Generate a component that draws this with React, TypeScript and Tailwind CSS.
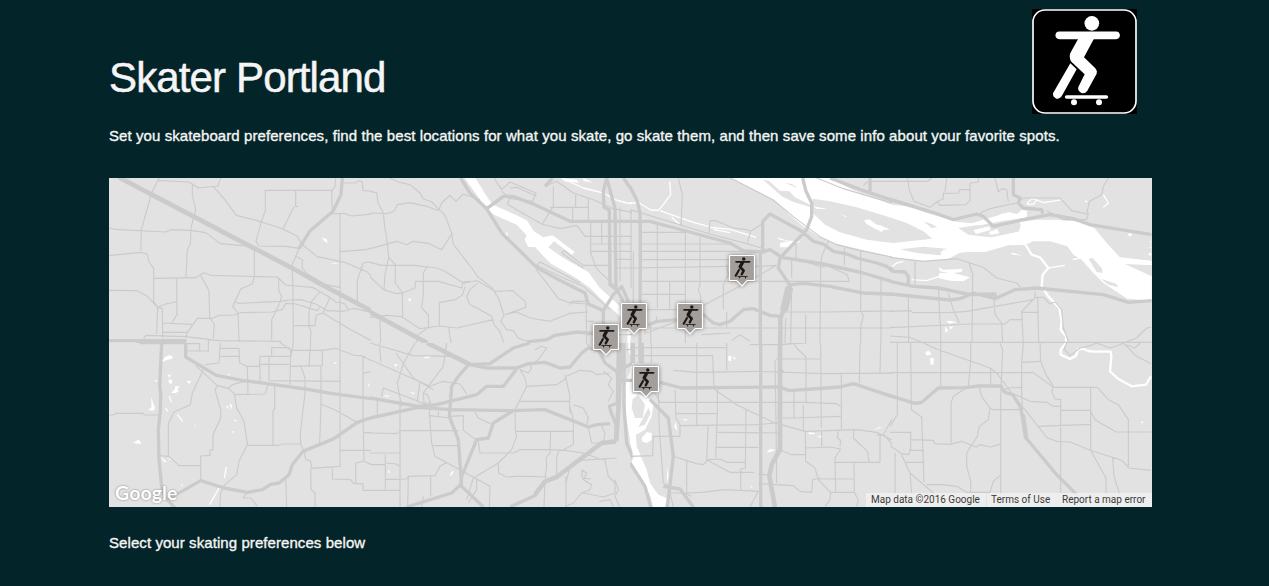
import React from "react";

type Tile = {
  x: number;
  y: number;
  water: string;
  land?: string;
  streams?: string;
  creek?: string;
  thin: string;
  medium: string;
  wide?: string;
  extra?: string;
};

// Each tile covers 261x165 map pixels and is drawn in units of a third of a pixel.
const tiles: Tile[] = [
  {
    x: 0,
    y: 0,
    water: "M638 180 L652 182 L657 194 L648 191Z M666 257 L678 254 L690 257Z",
    thin: "M150 0L128 45L97 155L95 218 M145 7L240 12L268 30L328 24L330 12L336 0 M250 16L250 52L260 95L246 150L244 198L235 215L231 298 M0 150L20 154L168 162L188 155L245 157L290 164L334 197L435 206 M0 233L95 223L115 228L120 252L134 272L134 370L146 388 M135 301L260 299L285 284L305 292L505 297L530 321L610 328L662 358L680 372L706 376L718 394 M313 26L345 62L382 112L455 131L520 152L565 175L578 198 M668 37L469 37L469 98L457 131L441 190L450 204L530 205L570 211 M560 37L560 85L568 86 M556 85L522 152 M680 0L678 25L668 40L670 98 M668 108L705 106L728 114L810 106 M693 108L693 495 M700 15L738 15L752 8L760 12L762 37L805 42L808 80 M695 221L770 215L810 203 M578 198L625 236L710 254L775 282L810 322 M570 212L549 262L552 330L553 495 M560 235L580 245L580 270L595 288L650 320L693 328 M745 372L745 307L762 255L780 252L810 262 M436 208L436 296L430 318L395 333L371 386L387 405L390 490 M378 372L390 376L515 370L540 366L575 365L620 378L655 398L705 400L735 391L790 404 M0 337L85 338L115 355L146 388L143 468 M146 388L170 378L203 371 M203 302L204 410L188 435 M146 388L160 392L161 480 M162 435L250 439 M162 463L235 463 M275 292L300 338L302 420L316 438L313 480 M230 480L235 463L265 421L310 421L330 412L375 411L395 404L490 402L520 394L530 376L560 378L625 398L632 388 M508 298L510 340L518 355L510 380L488 425L488 485 M104 482L110 472L230 476L330 488L515 490L515 495 M632 342L608 370L600 400L600 445L606 460L604 495 M662 360L642 405L622 412L618 443L555 443 M642 405L720 452L800 495 M298 482V495 M790 412L800 427L810 427",
    medium: "M700 0L696 50L672 100L602 160L570 212 M0 488L232 488 M80 491L232 491",
    wide: "M30 -2L430 208L545 268L620 310L812 412",
  },
  {
    x: 261,
    y: 0,
    water:
      "M284 0L316 0L350 55L368 80L440 112L472 128L490 158L520 178L548 172L614 222L606 230L552 190L535 208L580 240L655 282L690 330L750 385L756 420L700 370L660 330L622 302L540 255L495 207L475 207L464 185L470 172L440 140L375 112L350 95L320 50Z M405 170L412 160L413 176Z M114 364L124 360L120 372Z M772 455L785 460L780 495L772 495Z M572 0L620 5L628 14L585 10Z M640 0L670 15L640 8Z",
    streams: "M585 5L640 30L700 45L735 65L770 75L805 78",
    thin: "M60 0L85 12L120 20L150 45L160 62L185 72L205 92L222 108L232 130L245 165L250 198L280 238L305 270L325 298L365 328L385 360L395 390L402 412L392 430L410 455L430 458L445 480L470 490 M205 98L215 75L240 52L258 70L280 48L330 65 M0 40L20 44L24 75L40 105L44 145L50 180L56 238L76 260L76 315L98 345 M0 105L50 107L72 100L82 80L120 74L170 85L205 98 M0 212L80 190L110 200L130 190L175 196L215 215L247 165 M0 253L35 262L130 262L200 270L225 280L275 312L300 310 M56 238L45 290L42 335 M0 296L40 335L75 346L97 346L135 330L137 310L205 310L275 330L278 316L300 312L322 308 M172 265L160 285L160 350L155 390L175 410L176 452 M97 346L98 416 M208 444L208 374L255 365L278 350L285 325 M322 316L300 335L290 358L300 380L330 395L365 415L372 440L388 458L402 495 M322 308L350 325L375 340L428 338L465 370L468 388L405 410 M0 418L50 412L95 416L150 452L208 444L260 450L370 425 M405 410L440 402L480 420L540 430L600 406L655 402 M498 273L545 335L565 362L600 374L650 378 M510 252L500 262L580 300L640 325L720 395 M510 252L630 315 M372 0L395 35L420 12L498 45L488 70L412 60 M550 25L550 85L517 138 M655 60L655 130M617 45L617 88L540 88 M608 88L608 130M617 88L655 88 M395 40L420 60L412 78L440 95L515 138L570 152L620 142L645 175L810 175 M662 130L662 225L680 272L740 330 M695 135L695 198M662 198L810 198M662 220L810 220 M575 225L582 218L640 262L690 262L720 262 M575 225L640 270 M735 244L810 244M740 270L810 270M750 88V310M783 95V330M797 80V320 M525 25L560 10L610 45L670 65L730 92L810 108 M420 30L440 28L500 55 M648 355L650 495M650 430L670 430 M650 470L810 470 M30 425L32 495 M236 450L243 495 M138 495L145 470L170 452 M600 380L605 370L648 370",
    medium: "M272 0L300 45L350 92L395 165L500 268L560 302L645 345L655 378L700 398L730 350L755 325L775 370 M350 92L400 55L428 55L495 80L600 130L810 130 M525 25L548 0 M710 0L700 40L702 88L718 96L720 320L740 335 M710 0L735 90L738 330L760 370 M760 0L795 50L810 88 M700 398L700 440 M470 492L530 485L555 472L620 462L670 466",
    wide: "M0 402L172 495",
  },
  {
    x: 521,
    y: 0,
    water: "M450 195L480 188L512 190L478 208L450 208Z M440 178L480 190L450 186Z M800 255L810 250L808 275L792 270Z",
    streams: "M0 75L28 75L62 96L85 97L100 80L122 50L119 10 M90 98L130 112L190 133L235 145 M125 118L150 140 M240 148L300 154L378 178 M250 154L300 164",
    thin: "M302 0L430 66L490 116L570 176L620 200L690 218L812 242 M0 95L240 168L350 197L445 225 M145 0L157 50L153 145 M237 165L240 128L258 128L310 150L350 155L362 160L352 192M362 160L400 135 M82 135L82 390 M166 160V495 M210 178V320L205 335L212 355V375 M35 163H165 M35 198H300 M35 220H400 M35 245H300 M5 270L300 265L390 265L440 262 M35 310H655 M119 312V395M35 349H165 M35 395H145 M290 262L295 290L280 320L280 395 M215 385L335 322L440 262 M290 402V450 M485 248V300 M498 190V240M498 240L575 268L590 262 M595 190L575 235L572 268L570 495M590 262L652 290L658 312 M643 210V262M692 218V400L700 412L692 445V495 M753 305V495 M465 402H590L700 400L810 398 M220 450H810 M215 470L300 465 M305 488L330 470L360 490 M485 320L482 495 M467 420L465 495 M527 410V495M700 24L708 14L720 10L810 10M560 0L640 32L700 50L812 82 M45 395V470M62 430V495 M0 450H140 M80 415V430M50 465L140 430 M10 220V380",
    medium: "M30 495L31 170L30 105L22 70L0 25 M0 130L60 130L190 165L300 195L340 218L400 222L420 215L455 238L580 258L700 285L812 318 M398 222L398 130L420 108L515 160L550 190L580 198L610 220L650 228L680 240L740 255L770 265L790 282L812 282 M518 0L528 40L545 75L545 115L530 155L450 240L445 270L480 322 M482 320L520 316L600 325L700 345L812 350 M391 222L391 495 M600 0L700 38L812 75M720 0V40 M55 442L80 430L142 425 M218 408L250 435L270 440L300 430L340 395L370 392L420 412L450 415",
    wide: "M480 320L462 395L451 420L451 495",
    extra: "M478 328L462 398",
  },
  {
    x: 781,
    y: 0,
    water:
      "M0 80L60 85L130 115L205 132L245 136L270 128L340 108L355 102L380 108L400 98L412 110L405 120L385 122L330 135L260 145L210 150L240 168L305 178L385 160L392 145L390 132L440 125L500 125L580 132L615 152L650 195L690 238L785 248L785 262L705 258L785 295L785 368L712 362L640 315L610 285L575 245L550 230L532 205L480 190L430 190L405 200L355 202L285 222L210 222L170 245L95 248L0 238Z M145 268L160 275L218 272L215 282L190 285L240 298L220 310L180 308L145 300L148 285L175 285L150 280Z M715 166h10v8h-10Z M775 225L783 225V234L777 232Z M776 206L783 206V212Z M778 190L783 190V196Z M360 225L372 225L395 233L370 230Z M170 430L180 428L200 433L178 437Z M165 445L175 458L166 464Z M178 446L190 445L182 455Z",
    land: "M596 242L608 240L635 270L638 285L620 282Z M632 302L680 318L685 328L655 320Z M650 325L695 355L670 350Z",
    streams: "M640 50L655 75L640 88 M65 305L110 308L148 295 M475 270L505 265L525 262 M548 245L570 240 M585 68L592 72 M0 270L20 255L40 250 M410 78L425 62L440 64L432 78L412 80 M440 66L460 74L500 68L518 64",
    creek: "M405 198L425 230L450 238L475 270L458 290L455 325L475 355L508 390L515 430L512 455L528 475L528 495",
    thin: "M0 10H112L125 0 M52 0L58 35L68 60L72 70L120 88L140 72L160 62L160 46L205 45L208 35L240 35L240 15L265 12L265 0 M170 0L165 40M240 35V68L228 80L150 82L140 70 M315 0L325 42L335 32L350 35L355 70 M275 102L300 92L380 75L400 60L510 60L545 98L590 108L598 70L635 50L640 25L655 0 M0 60L70 82L135 106L195 125 M275 102L270 115M470 98L520 125L590 125L595 105 M0 238L100 250L200 242L240 255L280 268L320 300L380 315L392 328 M238 255L248 290L246 495 M75 250L75 322 M0 400L60 398L70 404L190 403L230 400L300 388L430 365M55 350L56 495 M146 335L148 400L152 450L152 495 M0 448L20 448L240 438L345 438L360 425L395 425 M175 345L180 365L192 400L208 435 M312 365L315 410L335 435L338 495 M0 474L60 478L100 495 M435 340V360L395 400L400 495 M395 403H445M443 360L446 495 M435 358L460 358L480 378L495 372L515 395L520 450L535 490 M0 493H785 M700 495L740 480L770 450L783 448",
    medium: "M0 65L135 105L190 125L260 108L280 115L310 145L400 125L480 110L550 122L600 140L785 170 M370 0V50L390 60L385 75L400 90L455 95L458 108 M0 268L10 280L45 282L55 295V322 M0 310L70 325L145 330L240 350L315 348V362 M0 348L180 366L210 362L250 345L315 362L375 335L440 330L640 350L715 373L785 368",
  },
  {
    x: 0,
    y: 165,
    water:
      "M158 58L168 42L182 36L192 42L188 48L175 50Z M175 96L186 94L182 104Z M178 110L190 110L188 124L180 120Z M232 114L246 114L242 123Z M198 130L212 130L205 140L210 145L200 150L186 150L198 138Z M126 162L138 195L134 203L118 202L128 192Z M72 300L90 289L97 303Z M152 338L175 358L165 356Z M180 345L185 350L180 352Z M350 188L358 190L358 200Z M362 182L370 186L366 200Z M372 215L382 214M374 230L384 232L380 236Z M370 265L376 265L372 272Z M258 242L261 252L257 248Z M672 60L684 57L680 63Z M778 118L782 130L778 132Z M354 96L360 92L362 97Z M137 112L146 112L142 118Z M216 422L224 430L218 430Z",
    streams: "M205 215L222 236 M352 372L346 405 M330 435L302 485 M180 160L188 178 M170 195L176 205",
    thin: "M0 216L15 216L20 211L102 211L106 216L148 216 M230 2L272 2L272 24L298 24L298 0 M235 24H272 M260 68L325 128L318 140L335 200L335 225L312 275L312 320L303 322L303 337L275 339L275 412 M283 80L250 150L244 185L195 207L178 242L178 338L210 368L275 367 M178 340L152 338 M325 128L358 136L376 153L383 195L405 235L415 302L413 310L390 355L383 395L345 428L335 450L332 495 M290 65L330 60L334 0 M334 16L390 16L392 60L415 70L451 70L453 40L545 40L553 0 M334 40H390M488 40V14L540 14L545 22L640 22L680 16L735 37L760 38 M515 0L545 20L543 125 M451 64L540 64M480 40V113L693 115 M453 70V115M415 70L417 152M376 155L468 153L478 125 M358 136L370 125L415 113 M543 70L640 68L640 22 M605 0L600 68M576 70L588 105L588 150L574 270L575 305L585 322 M636 70V185L632 300 M497 130V198L492 202V307M413 307L510 307L520 303L575 303 M693 0V370L608 376 M590 350L585 322 M590 350L605 354L608 376 M636 183L680 202L742 237 M760 38L795 58L805 75L810 82 M762 38V230L765 355L780 362L810 365M763 268L810 270M695 322L780 322L810 330 M605 376L606 440L618 450V495 M670 376V408L725 410L735 422L762 422L762 442L810 442M740 422V360L762 355 M530 402L533 495 M413 450L402 465L425 465L445 490 M810 82L775 88L762 92",
    medium: "M158 0L152 130L155 150L154 205L148 260L150 350L158 430L165 460L198 495 M92 -1H230V42L322 97L400 112L590 138L670 152L810 170 M175 470L275 413L345 435L415 448L460 440L485 424L510 420L540 395L550 365L582 325L675 287L745 238L810 216",
  },
  {
    x: 261,
    y: 165,
    water:
      "M158 46L172 38L185 38L175 45Z M72 65L84 63L76 72Z M118 146L135 150L130 154Z M38 157L62 158L50 162Z M240 395L248 382L250 388L242 400Z M53 380L62 388L56 390Z M776 25L784 50L780 85L765 130L768 220L780 290L810 360L810 200L795 180L800 150L790 140L790 0L775 0Z",
    land: "M800 170L788 205L790 250L810 290L810 170Z",
    thin: "M28 0L33 58 M0 50L90 90L180 130L220 115L270 123L290 152 M0 0L130 38L240 40L290 62 M135 0L100 62L82 120L90 165L95 190 M78 30L130 105L190 140 M230 0L220 70L190 110L160 150L162 180L182 180L172 155L160 150 M35 160L40 135L145 175M150 115L142 175L182 190L178 210L185 300L195 340L265 378L360 430L358 495 M22 170V215 M90 175V492M0 270L80 272L92 263L265 263 M0 330H90M46 335V440 M0 365H46M0 442H90 M46 360L78 363L90 370 M46 410L110 408L115 400L195 398L210 370L230 358 M115 400L113 492 M182 400V460M155 495L160 460 M190 308L265 308M240 220L280 218V262L320 292 M180 218L240 225M205 205V222 M315 208L325 225L368 245 M435 200L436 262L440 280L425 320L385 360L310 405L290 470 M325 295L330 330L430 330L450 320L540 320L585 322L640 330L690 348 M436 265L610 265M450 175H598L600 210M435 200L470 130L465 105L450 80L475 90L485 75L480 65 M470 130L560 125L590 105 M495 20L515 10L530 15L505 50L485 65 M585 95L600 160L598 185L610 230V305L580 320 M590 100L630 82L665 85L680 95L720 90 M542 265L540 330L528 345L530 370L525 405 M385 362L386 390L410 402L440 400L480 400L530 402 M568 322L560 340V400 M588 400V492M588 420L600 370L635 352L690 348L740 345 M635 380L650 390L640 410L665 425L660 440L635 450L610 480L588 490 M636 380L636 405L662 408M640 450L700 462L735 450L735 420L715 400L705 350L690 348 M525 410L522 495 M320 405L320 440L295 480 M610 185L640 195L655 225L650 245 M655 255L665 300L690 300 M700 85L725 105L715 125L730 145L715 175 M735 410L745 440L735 460L750 495 M688 475L720 470L730 490 M745 0V60M720 20H810 M650 0L665 20L690 15 M690 240L705 270L700 295",
    medium: "M300 65L350 75L440 75L475 62L525 58L570 75L600 72L635 30L655 15L685 22 M300 65L360 62L400 35L430 15L480 0 M300 60L265 100L245 130L238 220L265 290L275 430L340 492 M0 165L145 190L200 185L320 155L350 130L400 130L440 78 M0 225L145 193L240 200L430 203L525 200L600 230L655 252L680 245L720 242 M430 203L370 240L355 285L320 290L275 400L272 425L245 450L110 492 M685 20L705 60L740 85L745 110 M745 0L742 180L718 190L725 210 M720 200L738 245L740 290 M750 80L790 60 M762 0V190L770 300L812 400 M745 112L795 112 M420 492L500 455",
    wide: "M172 0L300 65 M495 455L525 415L560 402L695 300L738 295 M750 0L752 80 M750 80L745 200L738 295",
  },
  {
    x: 521,
    y: 165,
    water:
      "M0 150L50 160L70 185L65 220L45 260L18 275L20 310L50 380L60 420L85 455L110 465L105 492L70 492L60 455L25 400L0 360Z M35 285L50 268L65 270L65 290L50 300L36 295Z M132 250L138 238L142 265Z M110 370L116 400L112 420Z M158 228L175 230L165 233Z M295 38L305 40L303 55L294 52Z M310 40L318 46L312 50Z M410 328L420 318L438 320L418 328Z M535 268L555 270L552 274L538 274Z M560 280L578 278L575 284Z M732 262L745 253L758 252Z M360 432L366 429L368 434Z",
    land: "M8 168L25 155L45 185L38 225L15 225L5 195Z M55 195L62 210L45 245L25 252Z M0 370L12 340L0 300Z",
    thin: "M0 14H290M0 38H248L252 135M290 0V82 M130 82L200 88L385 85L580 92L810 90 M64 0V60M40 0V60 M200 0V245 M88 178H520L620 182L632 190 M262 140V210L257 345 M138 212H262M135 140L138 225L150 245V280L70 280L68 338L0 340 M150 248L380 245L440 240 M252 138L320 185L430 238L525 265L680 260L740 268L800 298 M262 268L450 270M258 313H385 M348 200L346 375L332 378V445 M234 248L230 350L300 388L372 388 M130 340L200 362L220 365L235 350L270 348L290 358L348 358 M170 350V450L215 448L285 440L385 445L360 492 M120 450H165L185 460M120 450L130 492 M360 5L450 5L530 0 M460 5L490 0L500 15L528 42V180 M438 48H570M435 50L438 240L440 420M572 0L574 255 M492 145V225L632 220M440 225H495 M520 185V265 M634 92V258 M690 0L688 120M752 0L750 90M795 90L802 200L760 275 M448 320L485 335L528 335 M526 268L527 355L555 375L565 410L602 448L672 448 M575 265V310M527 315L600 312L632 318L615 345L617 448 M625 262L622 285L632 292L630 310 M612 358H750V275 M672 262L670 285L712 325L718 358 M672 358L673 448 M560 408H672 M740 275L765 278L800 322V492 M602 448L600 470L585 490 M410 395H385M385 422L490 428L510 445L545 448L548 410L570 405 M673 448L685 470L680 490 M85 150L88 260L95 350L100 420L118 430 M75 150L90 178M248 82V90",
    medium: "M90 118L155 135L450 132L478 143L630 132L670 122L740 145L810 168 M392 0V495 M60 170L115 225L130 340L112 492 M0 360L45 430L62 492 M100 430L150 438L190 492 M455 85L460 82",
    wide: "M450 0L450 320L425 365L418 400L435 492 M8 0V60 M32 0V60",
  },
  {
    x: 781,
    y: 165,
    water: "M105 30L115 22L125 34L112 38Z M120 45L132 45L130 66L122 64Z M752 238L760 234L758 242Z",
    creek: "M528 0L512 20L512 35L540 48L558 38L565 18L580 18L595 24L610 26L662 26L664 40L660 85L685 108L725 130L768 125L783 100",
    thin: "M0 89H430L490 133H622L655 170L685 185L715 230L715 375L783 382 M100 0L140 18L300 75L320 90L365 150L472 285L500 295L540 297L600 322L665 342L695 352L715 372 M22 0L22 215L0 250 M62 0L64 200L95 222L102 418 M152 0V132M242 0V55L235 130 M302 75V130M330 0L338 20L332 160V490 M400 0L395 60L395 150L400 260 M395 58L450 55M450 0L452 55L468 95L490 130L485 145L495 168L512 170V450 M365 150L420 175L470 178L490 190L512 190 M512 202H602M602 133V322M442 250L602 244M602 205L615 230L678 267H783 M345 140L355 135L398 133 M268 135L275 160L300 195L295 230L268 250L262 280L230 330L230 370L242 415V448 M300 195L310 200H395 M228 135L190 160L183 180V300 M0 268H62V318L57 335L35 332L0 308 M62 290L130 292L135 302L180 304L215 295L258 312L270 305L300 312L330 304 M57 322H102M45 358H102M35 335L60 390L130 450 M15 330V450 M110 425L155 425L200 430L230 448L300 448L310 415L330 398 M602 322L648 405V450M668 342L672 400L688 450 M60 392L65 450 M530 0L522 18L540 38L556 26L570 15L600 8L620 0 M620 0L660 15L690 5L700 0 M700 0L740 40L783 62M710 5L735 15L750 0",
    medium: "M0 158L75 181L95 178L145 135L225 134L265 129L332 129L345 148L368 155L390 190L400 230L408 285L500 395L560 455",
    extra: "",
    wide: "M398 215L409 288",
  },
];

const columbia = {
  channel:
    "M-58 0L240 0L300 32L360 56L420 78L520 102L600 125L640 150L660 172L720 178L720 215L630 224L590 245L515 248L420 235L330 214L260 198L200 172L160 145L120 112L70 65Z",
  islands:
    "M38 4L58 10L90 38L118 40L135 58L180 80L235 95L190 90L130 72L95 55Z M105 14L125 18L145 32L122 22Z M188 62L240 70L320 88L400 112L470 135L520 160L547 182L430 195L350 185L270 163L225 140L188 105Z M450 214L520 206L590 212L570 232L500 225Z M520 130L545 138L562 148L545 150Z M625 150L690 140L735 132L765 120L815 118L820 130L780 140L808 150L808 160L720 178L655 170Z",
  lagoons:
    "M342 127L358 124L380 140L392 142L420 155L400 156L395 162L375 152L350 138Z M270 108L292 116L285 116Z M188 84L235 94L200 92Z M670 156L718 145L722 156L678 168Z M716 162L742 153L748 166L722 171Z M570 225L580 215L605 212L590 228Z M660 140L700 130L760 106L800 110L815 96L832 98L830 116L808 122L760 128L690 142Z",
};

const spots = [
  { id: "northwest", left: 593, top: 324 },
  { id: "riverfront", left: 621, top: 303 },
  { id: "eastside", left: 677, top: 303 },
  { id: "hollywood", left: 729, top: 255 },
  { id: "southeast", left: 633, top: 366 },
];

function SkaterFigure() {
  return (
    <g stroke="currentColor" fill="none" strokeLinecap="round">
      <circle cx="179.5" cy="43" r="22" fill="currentColor" stroke="none" />
      <path d="M82 79H252" strokeWidth="23" />
      <path d="M138 79L187 87L156 145L190 178Q196 184 194 194L166 245Q158 256 147 251Q136 245 139 234L158 196L118 158Q110 146 115 132L142 83Z" fill="currentColor" stroke="none" />
      <path d="M115 163L134 181L91 258Q84 271 73 269Q62 264 63 253Z" fill="currentColor" stroke="none" />
      <path d="M104 264H223" strokeWidth="11" />
      <circle cx="126" cy="280" r="9" fill="currentColor" stroke="none" />
      <circle cx="201" cy="280" r="9" fill="currentColor" stroke="none" />
    </g>
  );
}

function Logo() {
  return (
    <svg className="h-[105px] w-[105px] text-white" viewBox="0 0 315 315" aria-label="Skater">
      <rect width="315" height="315" fill="#000" />
      <rect x="3" y="3" width="309" height="309" rx="36" fill="none" stroke="#fff" strokeWidth="5" />
      <SkaterFigure />
    </svg>
  );
}

function MapCanvas() {
  return (
    <svg className="block h-[329px] w-[1043px]" viewBox="0 0 1043 329" aria-hidden="true">
      <defs>
        <clipPath id="tile">
          <rect x="0" y="0" width="786" height="495" />
        </clipPath>
      </defs>
      <rect width="1043" height="329" fill="#e2e2e2" />
      {tiles.map((t) => (
        <g key={`${t.x}-${t.y}`} transform={`translate(${t.x} ${t.y}) scale(0.33333)`} clipPath="url(#tile)" fill="none" strokeLinejoin="round">
          <path d={t.water} fill="#fff" />
          {t.land && <path d={t.land} fill="#e2e2e2" />}
          {t.streams && <path d={t.streams} stroke="#fff" strokeWidth="4" />}
          {t.creek && <path d={t.creek} stroke="#fff" strokeWidth="7" />}
        </g>
      ))}
      <g transform="translate(641 0) scale(0.33333)">
        <path d={columbia.channel} fill="#fff" />
        <path d={columbia.islands} fill="#e2e2e2" />
        <path d={columbia.lagoons} fill="#fff" />
      </g>
      {tiles.map((t) => (
        <g key={`${t.x}-${t.y}`} transform={`translate(${t.x} ${t.y}) scale(0.33333)`} clipPath="url(#tile)" fill="none" strokeLinejoin="round">
          <path d={t.thin} stroke="#cbcbcb" strokeWidth="3.4" />
          <path d={t.medium} stroke="#cbcbcb" strokeWidth="10" />
          {t.wide && <path d={t.wide} stroke="#cbcbcb" strokeWidth="14" />}
          {t.extra && <path d={t.extra} stroke="#cbcbcb" strokeWidth="24" />}
        </g>
      ))}
    </svg>
  );
}

function Marker({ left, top }: { left: number; top: number }) {
  return (
    <svg
      className="absolute h-[40px] w-[34px] drop-shadow-[0_0_2px_rgba(0,0,0,0.45)]"
      style={{ left: left - 109 - 4, top: top - 178 - 4 }}
      viewBox="-4 -4 34 40"
      aria-hidden="true"
    >
      <path d="M1 0.5H25L25.5 1V25L25 25.5H18.2L13 31L7.8 25.5H1L0.5 25V1Z" fill="#a39e9a" stroke="#fff" strokeWidth="1.2" />
      <g transform="translate(0.6 0.6) scale(0.079)" className="text-[#1b1918]">
        <SkaterFigure />
      </g>
    </svg>
  );
}

export default function App() {
  return (
    <main className="h-[586px] w-full overflow-hidden bg-[#032428] pl-[109px] font-['Liberation_Sans',Arial,sans-serif] text-[#f5f5f5]">
      <div className="w-[1043px]">
        <header className="flex h-[114px] items-end justify-between pr-[15px]">
          <h1 className="mb-[12px] text-[42px] leading-[48px] tracking-[-0.86px] whitespace-nowrap [-webkit-text-stroke:0.5px_#f5f5f5]">Skater Portland</h1>
          <Logo />
        </header>
        <p className="mt-[11px] h-[22px] text-[15px] leading-[22px] tracking-[0.084px] whitespace-nowrap [-webkit-text-stroke:0.35px_#f5f5f5]">
          Set you skateboard preferences, find the best locations for what you skate, go skate them, and then save some info about your favorite spots.
        </p>
        <section className="relative mt-[31px] h-[329px] overflow-hidden">
          <MapCanvas />
          {spots.map((s) => (
            <Marker key={s.id} left={s.left} top={s.top} />
          ))}
          <span className="absolute bottom-[2px] left-[6px] font-['Lato',sans-serif] text-[19.5px] leading-[24px] font-bold tracking-[0.1px] text-white [text-shadow:0_0_2px_rgba(0,0,0,0.5)]">
            Google
          </span>
          <div className="absolute right-0 bottom-0 flex h-[14px] bg-[#f1f1f1]/80 font-['Roboto',sans-serif] text-[10px] leading-[14px] whitespace-nowrap text-[#3a3a3a]">
            <span className="w-[120px] pl-[5px]">Map data ©2016 Google</span>
            <span className="w-[71px] border-l border-[#e4e4e4] pl-[4px]">Terms of Use</span>
            <span className="w-[95px] pl-[5px]">Report a map error</span>
          </div>
        </section>
        <p className="mt-[25px] text-[15px] leading-[22px] tracking-[0.075px] [-webkit-text-stroke:0.35px_#f5f5f5]">Select your skating preferences below</p>
      </div>
    </main>
  );
}
